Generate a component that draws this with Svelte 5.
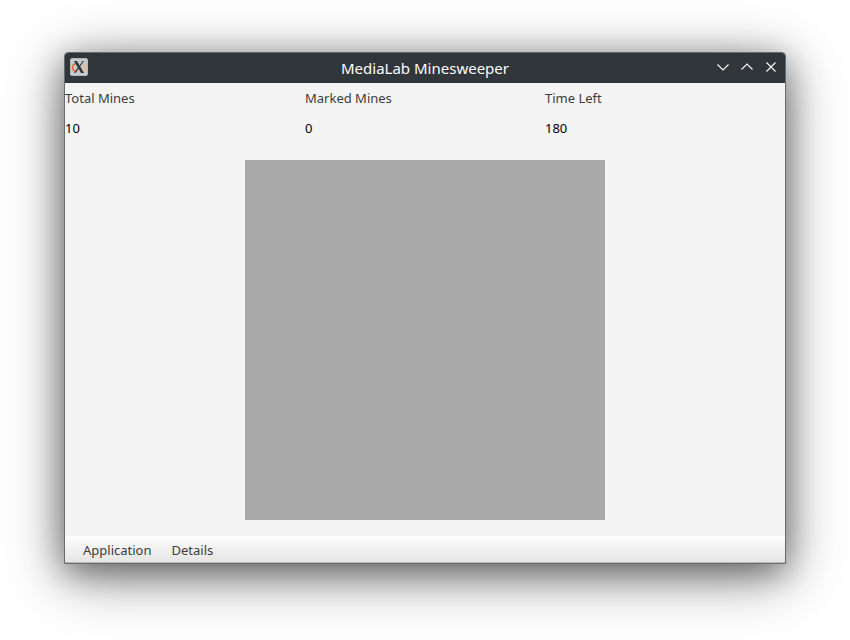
<script>
  let totalMines = $state(10);
  let markedMines = $state(0);
  let timeLeft = $state(180);

  const stats = $derived([
    { label: 'Total Mines', value: totalMines },
    { label: 'Marked Mines', value: markedMines },
    { label: 'Time Left', value: timeLeft },
  ]);
  const menus = ['Application', 'Details'];
  const controls = [
    { name: 'Minimize', path: 'M3.500 6.500 9 12l5.500-5.500' },
    { name: 'Maximize', path: 'M3.500 11.500 9 6l5.500 5.500' },
    { name: 'Close', path: 'M4.500 4.500l9 9m0-9-9 9' },
  ];
</script>

<div class="desktop">
  <div class="window">
    <header class="titlebar">
      <svg class="app-icon" viewBox="0 0 18 18" aria-hidden="true">
        <rect x="0.5" y="0.5" width="17" height="17" rx="1.5" fill="#c5c9cb" stroke="#b4b9bc" />
        <path d="M6.500 5.500C3.500 6 2.300 7.800 2.500 9.800c.3 2.200 2 3.500 4.500 3.900" fill="none" stroke="#f0662f" stroke-width="1.500" />
        <path d="M12 5.800c2.600.8 3.800 2.400 3.500 4.400-.4 2.200-2.200 3.500-5 3.800" fill="none" stroke="#edbd85" stroke-width="1.500" />
        <path d="M4 3h3l7 12h-3z" fill="#30363a" />
        <path d="M14 3h-1.300L9.500 7.500l.6 1zM8.100 9.300 4 15h1.300l3.500-4.600z" fill="#30363a" />
      </svg>
      <h1>MediaLab Minesweeper</h1>
      <div class="controls">
        {#each controls as control}
          <button type="button" aria-label={control.name}>
            <svg viewBox="0 0 18 18" aria-hidden="true"><path d={control.path} /></svg>
          </button>
        {/each}
      </div>
    </header>

    <main>
      <dl class="stats">
        {#each stats as stat}
          <div>
            <dt>{stat.label}</dt>
            <dd>{stat.value}</dd>
          </div>
        {/each}
      </dl>
      <div class="board"></div>
    </main>

    <nav class="menubar" aria-label="Game menu">
      {#each menus as menu}
        <button type="button">{menu}</button>
      {/each}
    </nav>
  </div>
</div>

<style>
  :global(body) {
    margin: 0;
    background: #fff;
  }
  .desktop {
    box-sizing: border-box;
    min-height: 100vh;
    padding: 52px 64px 76px;
    overflow: hidden;
    font: 13px/30px 'Noto Sans', sans-serif;
    color: #3c3c3c;
  }
  .window {
    border: 1px solid #626c74;
    border-radius: 4px 4px 0 0;
    background: #f4f4f4;
    box-shadow:
      0 12px 60px rgba(0, 0, 0, 0.44),
      0 8px 32px rgba(0, 0, 0, 0.4);
  }
  .titlebar {
    display: grid;
    grid-template-columns: 1fr auto 1fr;
    align-items: center;
    height: 30px;
    padding: 0 5px;
    border-radius: 3px 3px 0 0;
    background: #31363b;
    color: #fcfcfc;
  }
  .app-icon {
    width: 18px;
    height: 18px;
    margin-bottom: 2px;
  }
  h1 {
    margin: 0;
    font-size: 15px;
    font-weight: 400;
  }
  .controls {
    display: flex;
    justify-content: flex-end;
    gap: 6px;
    padding-bottom: 2px;
  }
  button {
    padding: 0;
    border: 0;
    background: none;
    color: inherit;
    font: inherit;
  }
  .controls button {
    display: flex;
  }
  .controls svg {
    width: 18px;
    height: 18px;
    fill: none;
    stroke: #fcfcfc;
    stroke-width: 1.1;
  }
  main {
    padding-bottom: 16px;
  }
  .stats {
    display: grid;
    grid-template-columns: repeat(3, 1fr);
    margin: 0;
  }
  dd {
    margin: 0;
    color: #000;
  }
  .board {
    width: 50%;
    aspect-ratio: 1;
    margin: 17px auto 0;
    background: #a9a9a9;
  }
  .menubar {
    display: flex;
    gap: 20px;
    padding: 2px 18px 0;
    border-bottom: 1px solid #bababa;
    background: linear-gradient(#fdfdfd, #e5e5e5);
  }
  .menubar button {
    line-height: 24px;
  }
</style>
